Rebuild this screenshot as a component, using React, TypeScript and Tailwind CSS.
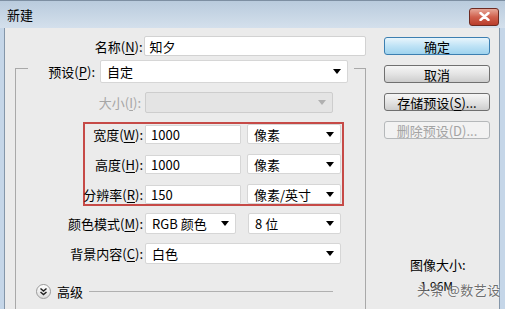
import React from "react";

function Arrow({ dim }: { dim?: boolean }) {
  return (
    <svg width="8" height="5" viewBox="0 0 8 5" className="shrink-0">
      <polygon points="0,0 8,0 4,5" fill={dim ? "#b0b0b0" : "#000"} />
    </svg>
  );
}

function Lbl({ t, k, cls }: { t: string; k: string; cls?: string }) {
  return (
    <span className={"whitespace-nowrap " + (cls || "")}>
      {t}(<u className="underline underline-offset-2">{k}</u>):
    </span>
  );
}

function Sel({ w, h, text, dim }: { w: string; h: string; text?: string; dim?: boolean }) {
  return (
    <div
      className={
        "flex items-center justify-between pl-[6px] pr-[6px] rounded-[2px] border " +
        w +
        " " +
        h +
        " " +
        (dim ? "bg-[#e4e4e4] border-[#cdcdcd]" : "bg-white border-[#d6d6d6]")
      }
    >
      <span className="whitespace-nowrap">{text}</span>
      <Arrow dim={dim} />
    </div>
  );
}

function Inp({ w, h, text }: { w: string; h: string; text: string }) {
  return (
    <div className={"flex items-center pl-[5px] bg-white border border-[#d6d6d6] rounded-[1px] " + w + " " + h}>
      {text}
    </div>
  );
}

function Btn({ children, kind }: { children: React.ReactNode; kind?: "default" | "disabled" }) {
  const cls =
    kind === "default"
      ? "border-[#3c7fb1] bg-gradient-to-b from-[#e8f5fc] via-[#bfe3f6] to-[#9fd3ee] text-black"
      : kind === "disabled"
      ? "border-[#b5b8ba] bg-[#f2f2f2] text-[#a3a3a3]"
      : "border-[#707070] bg-gradient-to-b from-[#f6f6f6] via-[#e4e4e4] to-[#cdcdcd] text-black";
  return (
    <div className={"w-[106px] h-[18px] rounded-[3px] border flex items-center justify-center whitespace-nowrap " + cls}>
      {children}
    </div>
  );
}

export default function App() {
  return (
    <div className="relative w-[505px] h-[309px] overflow-hidden flex flex-col bg-[#c5d6e8] font-['Noto_Sans_CJK_SC',sans-serif] text-[13px] leading-none text-black">
      {/* title bar */}
      <div className="h-[28px] shrink-0 flex items-center justify-between border-t border-[#7d8fa2] bg-gradient-to-b from-[#b9cbdd] to-[#d4e0ec]">
        <span className="pl-[7px]">新建</span>
        <div className="mr-[6px] mt-[4px] w-[30px] h-[18px] rounded-[3px] border border-[#6e2b22] bg-gradient-to-b from-[#e6a799] via-[#d0604d] to-[#b93d2b] flex items-center justify-center">
          <svg width="11" height="9" viewBox="0 0 11 9">
            <path d="M1.5 1 L9.5 8 M9.5 1 L1.5 8" stroke="#fff" strokeWidth="2.4" strokeLinecap="round" />
          </svg>
        </div>
      </div>

      {/* body */}
      <div className="flex-1 min-h-0 flex ml-[4px] mr-[5px] border-l border-r border-[#8496a9] bg-[#ebebeb]">
        {/* left column */}
        <div className="w-[361px] shrink-0 flex flex-col">
          <div className="mt-[8px] h-[20px] flex items-center">
            <div className="w-[138px] flex justify-end">
              <Lbl t="名称" k="N" />
            </div>
            <div className="ml-[1px] w-[223px] h-[20px] flex items-center pl-[5px] bg-white border border-[#d2d2d2] rounded-[2px]">
              知夕
            </div>
          </div>

          {/* group box */}
          <div className="mt-[12px] ml-[10px] w-[351px] flex-1 flex flex-col border-l border-t border-r border-[#a9a9a9]">
            <div className="-mt-[9px] ml-[12px] w-[326px] h-[23px] flex items-center bg-[#ebebeb]">
              <div className="w-[67px] flex justify-end">
                <Lbl t="预设" k="P" />
              </div>
              <div className="ml-[5px]">
                <Sel w="w-[248px]" h="h-[23px]" text="自定" />
              </div>
            </div>

            <div className="mt-[9px] h-[21px] flex items-center">
              <div className="w-[125px] flex justify-end">
                <Lbl t="大小" k="I" cls="text-[#a6a6a6]" />
              </div>
              <div className="ml-[4px]">
                <Sel w="w-[188px]" h="h-[21px]" dim />
              </div>
            </div>

            <div className="mt-[9px] ml-[67px] w-[261px] flex flex-col gap-[10px] border-2 border-[#c64a47]">
              {[
                { t: "宽度", k: "W", v: "1000", u: "像素" },
                { t: "高度", k: "H", v: "1000", u: "像素" },
                { t: "分辨率", k: "R", v: "150", u: "像素/英寸" },
              ].map((r) => (
                <div key={r.k} className="h-[20px] flex items-center">
                  <div className="w-[58px] flex justify-end">
                    <Lbl t={r.t} k={r.k} />
                  </div>
                  <div className="ml-[2px]">
                    <Inp w="w-[96px]" h="h-[19px]" text={r.v} />
                  </div>
                  <div className="ml-[6px]">
                    <Sel w="w-[94px]" h="h-[20px]" text={r.u} />
                  </div>
                </div>
              ))}
            </div>

            <div className="mt-[7px] h-[21px] flex items-center">
              <div className="w-[127px] flex justify-end">
                <Lbl t="颜色模式" k="M" />
              </div>
              <div className="ml-[2px]">
                <Sel w="w-[91px]" h="h-[21px]" text="RGB 颜色" />
              </div>
              <div className="ml-[12px]">
                <Sel w="w-[93px]" h="h-[21px]" text="8 位" />
              </div>
            </div>

            <div className="mt-[9px] h-[21px] flex items-center">
              <div className="w-[127px] flex justify-end">
                <Lbl t="背景内容" k="C" />
              </div>
              <div className="ml-[2px]">
                <Sel w="w-[196px]" h="h-[21px]" text="白色" />
              </div>
            </div>

            <div className="mt-[19px] h-[16px] flex items-center">
              <div className="ml-[20px] w-[15px] h-[15px] rounded-full border border-[#9a9a9a] bg-gradient-to-b from-white to-[#dcdcdc] flex items-center justify-center">
                <svg width="9" height="9" viewBox="0 0 9 9">
                  <path d="M1.5 1.5 L4.5 4 L7.5 1.5 M1.5 5 L4.5 7.5 L7.5 5" stroke="#222" strokeWidth="1.5" fill="none" />
                </svg>
              </div>
              <span className="ml-[6px]">高级</span>
              <div className="ml-[6px] w-[244px] h-[1px] bg-[#b0b0b0]" />
            </div>
          </div>
        </div>

        {/* right column */}
        <div className="flex-1 flex flex-col pl-[18px]">
          <div className="mt-[9px]">
            <Btn kind="default">确定</Btn>
          </div>
          <div className="mt-[10px]">
            <Btn>取消</Btn>
          </div>
          <div className="mt-[10px]">
            <Btn>
              存储预设(<u className="underline underline-offset-2">S</u>)...
            </Btn>
          </div>
          <div className="mt-[10px]">
            <Btn kind="disabled">
              删除预设(<u className="underline underline-offset-2">D</u>)...
            </Btn>
          </div>
          <div className="mt-[119px] ml-[26px]">图像大小:</div>
          <div className="mt-[9px] ml-[36px] text-[12px]">1.96M</div>
        </div>
      </div>

      {/* watermark overlay */}
      <div className="absolute left-[417px] top-[283px] text-[13px] tracking-[0.5px] text-[#4a4a4a]/80 whitespace-nowrap [text-shadow:0_0_2px_#fff]">
        头条 @数艺设
      </div>
    </div>
  );
}
